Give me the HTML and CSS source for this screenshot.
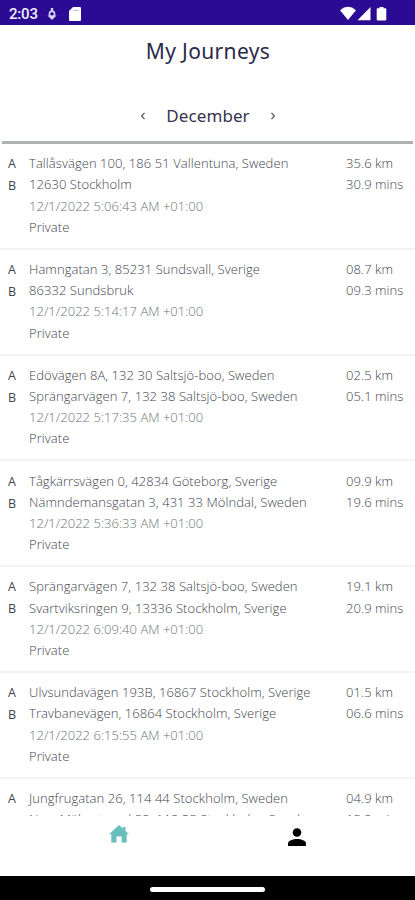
FILE: index.html
```html
<!DOCTYPE html>
<html lang="en">
<head>
<meta charset="utf-8">
<title>My Journeys</title>
<link rel="stylesheet" href="styles.css">
</head>
<body>
<div class="screen">
  <header class="status">
    <span class="clock">2:03</span>
    <svg class="debug" width="10" height="14" viewBox="0 0 10 14"><path d="M5 1v4" stroke="#d9d4f2" stroke-width="2.400"/><circle cx="5" cy="7" r="2.600" fill="none" stroke="#d9d4f2" stroke-width="1.600"/><path d="M.5 8.500h9L5 13z" fill="#d9d4f2"/><circle cx="5" cy="7" r="1.200" fill="#2b0a94"/></svg>
    <svg class="sdcard" width="12" height="14" viewBox="0 0 12 14"><path d="M4 0h7a1 1 0 0 1 1 1v12a1 1 0 0 1-1 1H1a1 1 0 0 1-1-1V4z" fill="#fff"/><path d="M4 3.500h6" stroke="#c7c0e8"/></svg>
    <svg class="signals" width="48" height="16" viewBox="0 0 48 16"><path d="M0 4.200Q8 -2.500 16 4.200L8 14zM17.500 14.200L30.500 1v13.200zM39.500 1h4v1.300h2q.8 0 .8.800v10.500q0 .8-.8.800h-8q-.8 0-.8-.8v-10.500q0-.8.800-.8h2z" fill="#fff"/></svg>
  </header>
  <h1 class="title">My Journeys</h1>
  <nav class="month">
    <svg width="6" height="8" viewBox="0 0 6 8"><path d="M4.500 1L1.500 4l3 3"/></svg>
    <span class="month-name">December</span>
    <svg width="6" height="8" viewBox="0 0 6 8"><path d="M1.500 1l3 3-3 3"/></svg>
  </nav>
  <main class="list">
    <article class="trip"><div class="marks"><span>A</span><span>B</span></div><div class="info"><span>Tallåsvägen 100, 186 51 Vallentuna, Sweden</span><span>12630 Stockholm</span><time>12/1/2022 5:06:43 AM +01:00</time><span>Private</span></div><div class="stats"><span>35.6 km</span><span>30.9 mins</span></div></article>
    <article class="trip"><div class="marks"><span>A</span><span>B</span></div><div class="info"><span>Hamngatan 3, 85231 Sundsvall, Sverige</span><span>86332 Sundsbruk</span><time>12/1/2022 5:14:17 AM +01:00</time><span>Private</span></div><div class="stats"><span>08.7 km</span><span>09.3 mins</span></div></article>
    <article class="trip"><div class="marks"><span>A</span><span>B</span></div><div class="info"><span>Edövägen 8A, 132 30 Saltsjö-boo, Sweden</span><span>Sprängarvägen 7, 132 38 Saltsjö-boo, Sweden</span><time>12/1/2022 5:17:35 AM +01:00</time><span>Private</span></div><div class="stats"><span>02.5 km</span><span>05.1 mins</span></div></article>
    <article class="trip"><div class="marks"><span>A</span><span>B</span></div><div class="info"><span>Tågkärrsvägen 0, 42834 Göteborg, Sverige</span><span>Nämndemansgatan 3, 431 33 Mölndal, Sweden</span><time>12/1/2022 5:36:33 AM +01:00</time><span>Private</span></div><div class="stats"><span>09.9 km</span><span>19.6 mins</span></div></article>
    <article class="trip"><div class="marks"><span>A</span><span>B</span></div><div class="info"><span>Sprängarvägen 7, 132 38 Saltsjö-boo, Sweden</span><span>Svartviksringen 9, 13336 Stockholm, Sverige</span><time>12/1/2022 6:09:40 AM +01:00</time><span>Private</span></div><div class="stats"><span>19.1 km</span><span>20.9 mins</span></div></article>
    <article class="trip"><div class="marks"><span>A</span><span>B</span></div><div class="info"><span>Ulvsundavägen 193B, 16867 Stockholm, Sverige</span><span>Travbanevägen, 16864 Stockholm, Sverige</span><time>12/1/2022 6:15:55 AM +01:00</time><span>Private</span></div><div class="stats"><span>01.5 km</span><span>06.6 mins</span></div></article>
    <article class="trip"><div class="marks"><span>A</span></div><div class="info"><span>Jungfrugatan 26, 114 44 Stockholm, Sweden</span><span>Norr Mälarstrand 52, 112 35 Stockholm, Sweden</span></div><div class="stats"><span>04.9 km</span><span>15.2 mins</span></div></article>
  </main>
  <nav class="tabs">
    <svg class="home" width="20" height="18" viewBox="0 0 20 18"><path d="M10 0l4 3.600V2h2.500v4L20 9.200h-2.300V17.500h-5v-6H7.500v6H2.300V9.200H0z" fill="#69bdbd"/></svg>
    <svg class="person" width="18" height="18" viewBox="0 0 18 18"><circle cx="9" cy="4.500" r="4.300"/><path d="M0 18v-2.500C0 12.500 5 11 9 11s9 1.500 9 4.500V18z"/></svg>
  </nav>
  <footer class="gesture"><div class="pill"></div></footer>
</div>
</body>
</html>
```
FILE: styles.css
```css
* { box-sizing: border-box; }
body { margin: 0; background: #fff; font-family: "Open Sans", "Noto Sans", sans-serif; }
.screen { width: 415px; height: 900px; display: flex; flex-direction: column; overflow: hidden; }
.status { height: 25px; flex: none; background: #2b0a94; display: flex; align-items: center; padding: 2px 27px 0 9px; }
.clock { color: #f1effa; font: 500 15px/20px Roboto, sans-serif; letter-spacing: -.2px; width: 38px; }
.sdcard { margin-left: 12px; }
.signals { margin-left: auto; }
.title { flex: none; margin: 0; height: 53px; text-align: center; color: #29294a; font: 400 21px/53px "Noto Sans", sans-serif; letter-spacing: .35px; padding-left: 1px; }
.month { flex: none; height: 63px; display: flex; justify-content: center; align-items: center; gap: 20px; padding: 13px 0 0 1px; color: #34344e; font: 400 17px/24px "Noto Sans", sans-serif; letter-spacing: .1px; }
.month path { fill: none; stroke: #55555f; stroke-width: 1.200; }
.list { flex: none; height: 675px; overflow: hidden; }
.list::before { content: ""; display: block; height: 3px; margin: 0 2px; background: #adb1b0; }
.trip { height: 105.800px; display: grid; grid-template-columns: 21px 317px 1fr; padding: 9.200px 0 0 8px; border-bottom: 2px solid #f3f3f3; color: #43454f; font-size: 13px; line-height: 21.200px; white-space: nowrap; }
.trip span, .trip time { display: block; }
.info, .stats { font-weight: 300; letter-spacing: .065px; }
.info time { color: #6d7479; letter-spacing: .03px; }
.marks { color: #43434e; font-size: 12.500px; line-height: 22px; }
.tabs { flex: none; height: 60px; display: flex; padding: 9px 109px 0 109px; justify-content: space-between; }
.person { margin-top: 3px; }
.gesture { flex: 1; background: #000; display: flex; justify-content: center; padding-top: 11px; }
.pill { width: 115px; height: 5px; border-radius: 3px; background: #fff; }
```
